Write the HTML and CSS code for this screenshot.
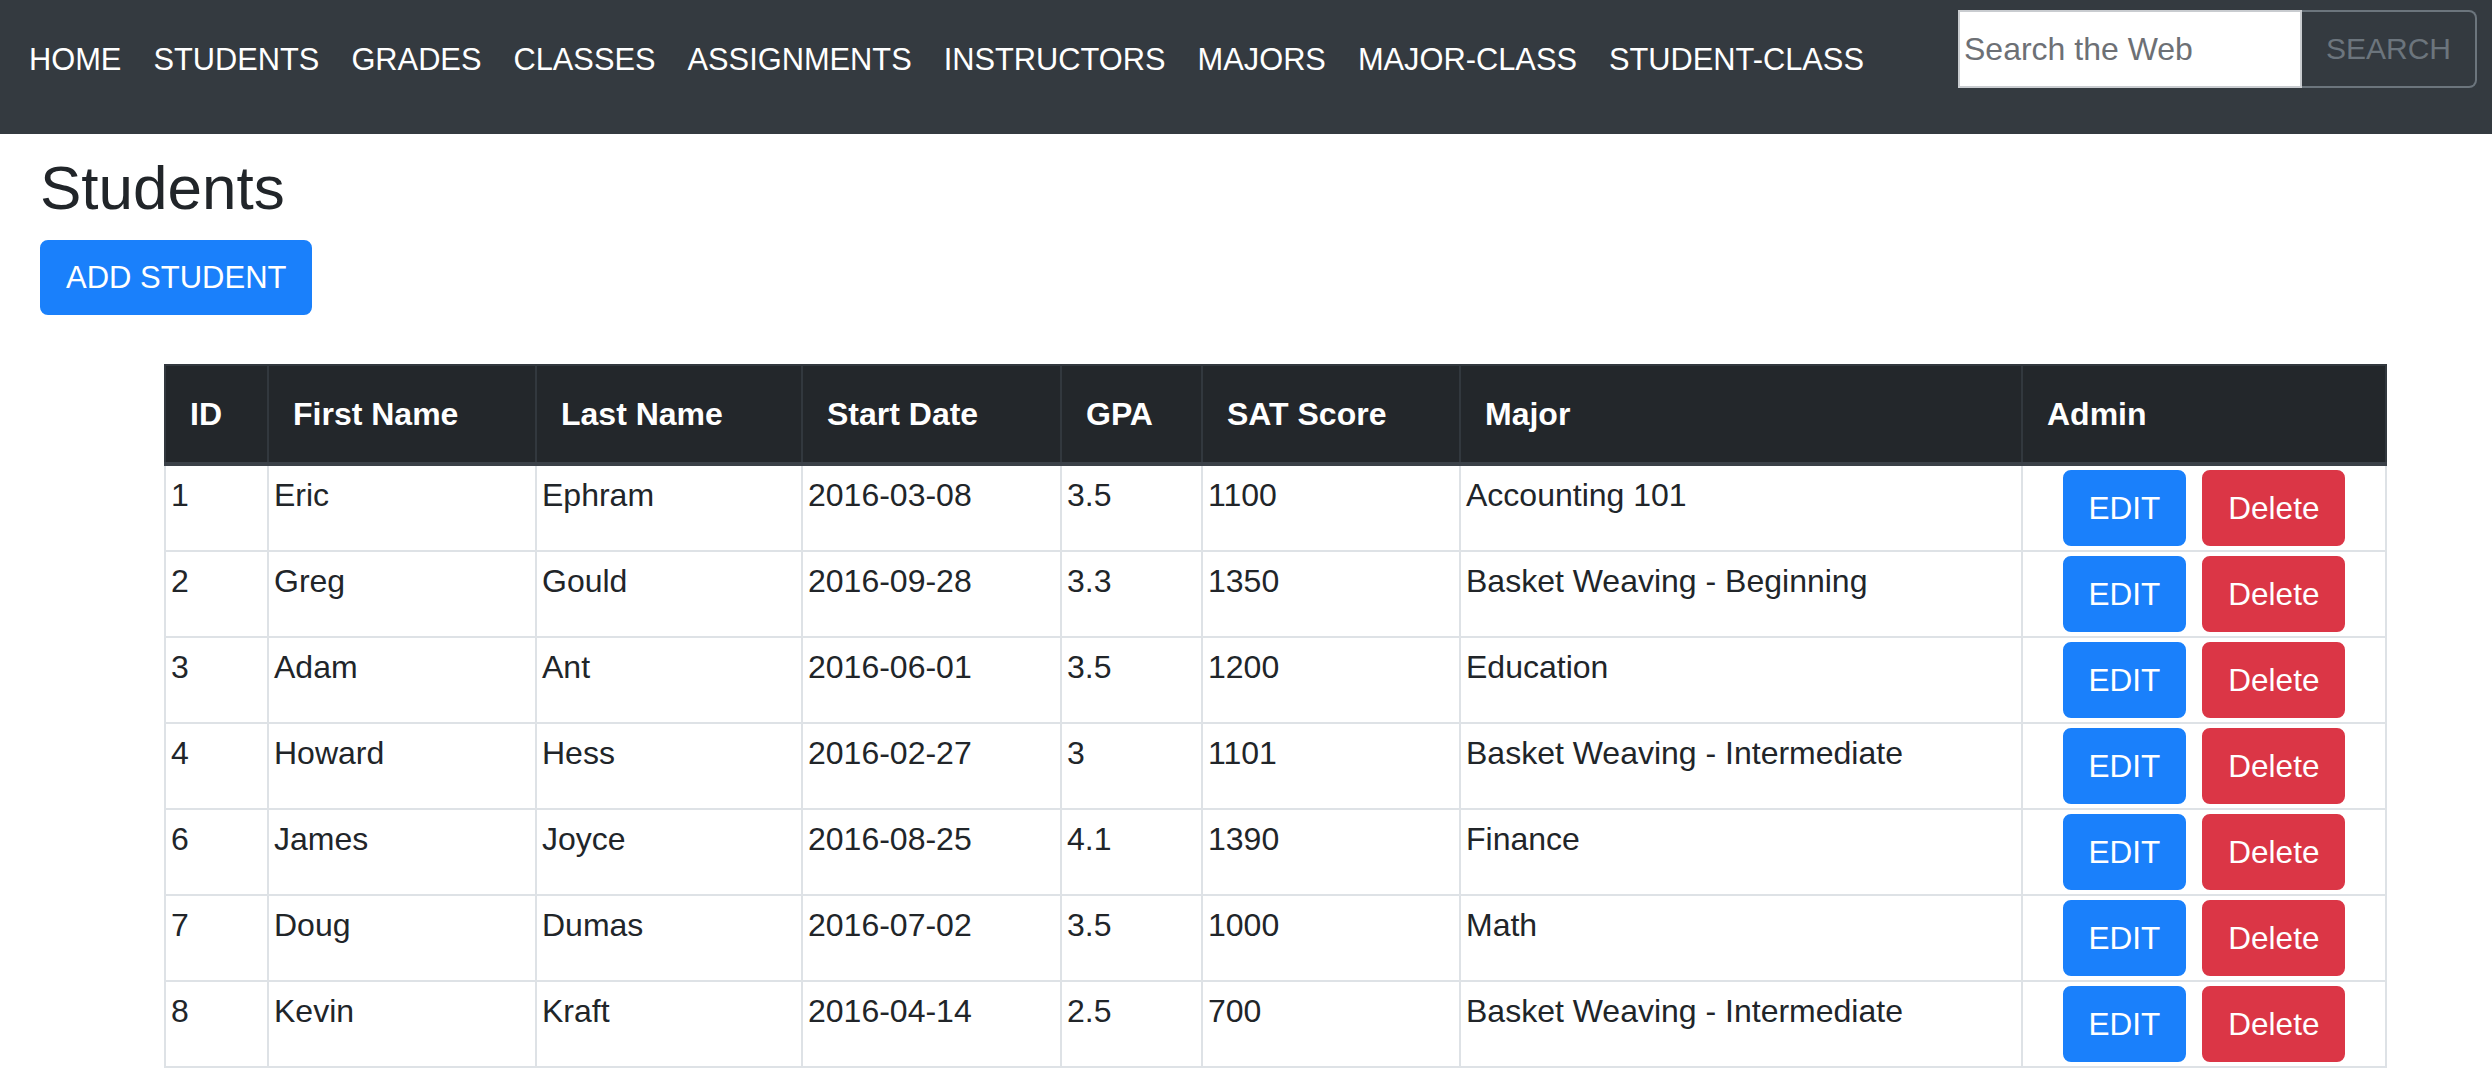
FILE: index.html
```html
<!DOCTYPE html>
<html lang="en">
<head>
<meta charset="utf-8">
<title>Students</title>
<link rel="stylesheet" href="styles.css">
</head>
<body>
<nav class="navbar">
  <ul class="nav-links">
    <li><a href="#">HOME</a></li>
    <li><a href="#">STUDENTS</a></li>
    <li><a href="#">GRADES</a></li>
    <li><a href="#">CLASSES</a></li>
    <li><a href="#">ASSIGNMENTS</a></li>
    <li><a href="#">INSTRUCTORS</a></li>
    <li><a href="#">MAJORS</a></li>
    <li><a href="#">MAJOR-CLASS</a></li>
    <li><a href="#">STUDENT-CLASS</a></li>
  </ul>
  <form class="search">
    <input class="search-input" type="text" placeholder="Search the Web">
    <button class="search-btn" type="button">SEARCH</button>
  </form>
</nav>
<main class="page">
  <h1 class="title">Students</h1>
  <button class="btn btn-primary btn-add" type="button">ADD STUDENT</button>
  <div class="table-wrap">
    <table class="table">
      <colgroup>
        <col class="c-id"><col class="c-first"><col class="c-last"><col class="c-date"><col class="c-gpa"><col class="c-sat"><col class="c-major"><col class="c-admin">
      </colgroup>
      <thead>
        <tr><th>ID</th><th>First Name</th><th>Last Name</th><th>Start Date</th><th>GPA</th><th>SAT Score</th><th>Major</th><th>Admin</th></tr>
      </thead>
      <tbody>
        <tr><td>1</td><td>Eric</td><td>Ephram</td><td>2016-03-08</td><td>3.5</td><td>1100</td><td>Accounting 101</td><td class="admin"><button class="btn btn-primary" type="button">EDIT</button><button class="btn btn-danger" type="button">Delete</button></td></tr>
        <tr><td>2</td><td>Greg</td><td>Gould</td><td>2016-09-28</td><td>3.3</td><td>1350</td><td>Basket Weaving - Beginning</td><td class="admin"><button class="btn btn-primary" type="button">EDIT</button><button class="btn btn-danger" type="button">Delete</button></td></tr>
        <tr><td>3</td><td>Adam</td><td>Ant</td><td>2016-06-01</td><td>3.5</td><td>1200</td><td>Education</td><td class="admin"><button class="btn btn-primary" type="button">EDIT</button><button class="btn btn-danger" type="button">Delete</button></td></tr>
        <tr><td>4</td><td>Howard</td><td>Hess</td><td>2016-02-27</td><td>3</td><td>1101</td><td>Basket Weaving - Intermediate</td><td class="admin"><button class="btn btn-primary" type="button">EDIT</button><button class="btn btn-danger" type="button">Delete</button></td></tr>
        <tr><td>6</td><td>James</td><td>Joyce</td><td>2016-08-25</td><td>4.1</td><td>1390</td><td>Finance</td><td class="admin"><button class="btn btn-primary" type="button">EDIT</button><button class="btn btn-danger" type="button">Delete</button></td></tr>
        <tr><td>7</td><td>Doug</td><td>Dumas</td><td>2016-07-02</td><td>3.5</td><td>1000</td><td>Math</td><td class="admin"><button class="btn btn-primary" type="button">EDIT</button><button class="btn btn-danger" type="button">Delete</button></td></tr>
        <tr><td>8</td><td>Kevin</td><td>Kraft</td><td>2016-04-14</td><td>2.5</td><td>700</td><td>Basket Weaving - Intermediate</td><td class="admin"><button class="btn btn-primary" type="button">EDIT</button><button class="btn btn-danger" type="button">Delete</button></td></tr>
      </tbody>
    </table>
  </div>
</main>
</body>
</html>
```

FILE: styles.css
```css
* { box-sizing: border-box; }
html, body { margin: 0; padding: 0; }
body {
  font-family: "Liberation Sans", Arial, Helvetica, sans-serif;
  color: #212529;
  background: #fff;
  overflow: hidden;
}

.navbar {
  display: flex;
  align-items: flex-start;
  height: 134px;
  padding: 10px 15px 0 13px;
  background: #343a40;
}
.nav-links {
  display: flex;
  list-style: none;
  margin: 26px 0 0;
  padding: 0;
}
.nav-links a {
  display: block;
  padding: 0 16px;
  font-size: 30.8px;
  line-height: 48px;
  color: #fff;
  text-decoration: none;
}
.search {
  display: flex;
  margin: 0 0 0 auto;
}
.search-input {
  width: 344px;
  height: 78px;
  margin: 0;
  padding: 0 4px;
  border: 2px solid #c9ccd0;
  border-radius: 0;
  background: #fff;
  font-family: inherit;
  font-size: 32px;
  color: #495057;
  outline: none;
}
.search-input::placeholder { color: #6d7075; }
.search-btn {
  width: 175px;
  height: 78px;
  margin: 0;
  padding: 0 24px;
  border: 2px solid #6c757d;
  border-left-width: 0;
  border-radius: 0 8px 8px 0;
  background: transparent;
  color: #6c757d;
  font-family: inherit;
  font-size: 30px;
}

.page {
  padding: 17px 0 0 40px;
}
.title {
  margin: 0 0 15px;
  font-size: 62px;
  font-weight: 500;
  line-height: 1.2;
  color: #212529;
}
.btn {
  display: inline-block;
  margin: 0;
  padding: 12px 24px;
  border: 2px solid transparent;
  border-radius: 8px;
  font-family: inherit;
  font-size: 31.5px;
  line-height: 48px;
  color: #fff;
  cursor: pointer;
}
.btn-primary { background: #1a80fb; border-color: #1a80fb; }
.btn-danger { background: #db3646; border-color: #db3646; }
.btn-add {
  height: 75px;
  padding: 0 24px;
  font-size: 31px;
  line-height: 71px;
}

.table-wrap {
  padding: 49px 0 0 124px;
}
.table {
  width: 2221px;
  table-layout: fixed;
  border-collapse: collapse;
  font-size: 32px;
  line-height: 48px;
}
.c-id { width: 103px; }
.c-first { width: 268px; }
.c-last { width: 266px; }
.c-date { width: 259px; }
.c-gpa { width: 141px; }
.c-sat { width: 258px; }
.c-major { width: 562px; }
.c-admin { width: 364px; }

.table th {
  padding: 24px;
  text-align: left;
  font-weight: 700;
  color: #fff;
  background: #23272b;
  border: 2px solid #32383e;
  border-bottom: 4px solid #3b4148;
  vertical-align: middle;
}
.table td {
  height: 86px;
  padding: 5px 5px 3px;
  vertical-align: top;
  border: 2px solid #dee2e6;
  white-space: nowrap;
}
.table td.admin {
  text-align: center;
  padding: 4px 0;
}
.admin .btn + .btn { margin-left: 16px; }
```
